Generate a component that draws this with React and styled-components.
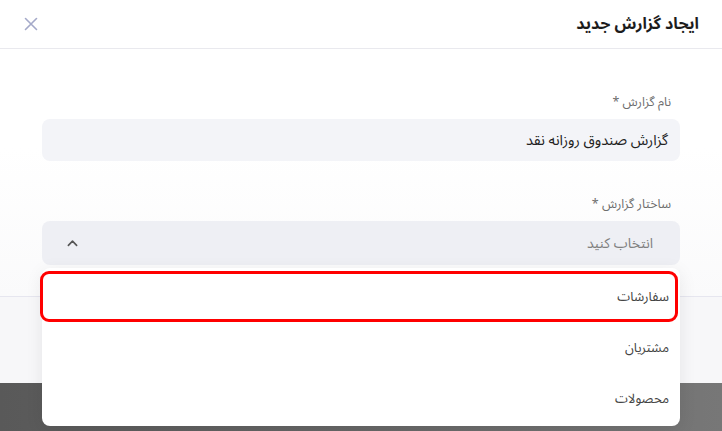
import styled, { createGlobalStyle } from 'styled-components';

const GlobalStyle = createGlobalStyle`
    html, body {
        margin: 0;
        padding: 0;
    }
    body {
        font-family: "Noto Sans Arabic", "DejaVu Sans", sans-serif;
        background: linear-gradient(90deg, #595959 0%, #6a6a6a 60%, #777 100%);
        height: 431px;
        overflow: hidden;
    }
`;

const options = ['سفارشات', 'مشتریان', 'محصولات'];

export default function App() {
    return (
        <>
            <GlobalStyle />
            <Modal dir="rtl">
                <Header>
                    <Title>ایجاد گزارش جدید</Title>
                    <CloseIcon viewBox="0 0 14 14">
                        <path d="M1.5 1.5 L12.5 12.5 M12.5 1.5 L1.5 12.5" />
                    </CloseIcon>
                </Header>
                <Body>
                    <Field>
                        <Label>نام گزارش *</Label>
                        <Input>گزارش صندوق روزانه نقد</Input>
                    </Field>
                    <Field>
                        <Label>ساختار گزارش *</Label>
                        <SelectWrap>
                            <Select>
                                <Placeholder>انتخاب کنید</Placeholder>
                                <Chevron viewBox="0 0 12 8">
                                    <path d="M1.5 6.5 L6 2 L10.5 6.5" />
                                </Chevron>
                            </Select>
                            <Menu>
                                {options.map((o, i) => (
                                    <Option key={o} $active={i === 0}>{o}</Option>
                                ))}
                            </Menu>
                        </SelectWrap>
                    </Field>
                </Body>
                <Footer />
            </Modal>
        </>
    );
}

const Modal = styled.div`
    width: 100%;
    height: 383px;
    background: #fff;
    display: flex;
    flex-direction: column;
`;

const Header = styled.div`
    height: 48px;
    padding: 0 23px 0 24px;
    border-bottom: 1px solid #e9e9ee;
    display: flex;
    align-items: center;
    justify-content: space-between;
`;

const Title = styled.h1`
    margin: 0;
    font-size: 16px;
    font-weight: 700;
    color: #1c1c1c;
`;

const CloseIcon = styled.svg`
    width: 14px;
    height: 14px;
    fill: none;
    stroke: #a4a9c9;
    stroke-width: 1.6;
    stroke-linecap: round;
`;

const Body = styled.div`
    padding: 44px 42px 0 42px;
    height: 247px;
    box-sizing: border-box;
    display: flex;
    flex-direction: column;
    gap: 34px;
    background: linear-gradient(180deg, #fff 40%, #fafafb 100%);
`;

const Field = styled.div`
    display: flex;
    flex-direction: column;
    gap: 8px;
`;

const Label = styled.label`
    font-size: 12.5px;
    color: #6d6d6d;
    padding-right: 9px;
    line-height: 18px;
`;

const Input = styled.div`
    height: 42px;
    background: #f3f4f8;
    border-radius: 8px;
    display: flex;
    align-items: center;
    padding: 0 12px;
    font-size: 14.5px;
    color: #222;
`;

const SelectWrap = styled.div`
    position: relative;
`;

const Select = styled.div`
    height: 44px;
    background: #eeeff4;
    border-radius: 8px;
    display: flex;
    align-items: center;
    justify-content: space-between;
    padding: 0 27px 0 25px;
    font-size: 14px;
`;

const Placeholder = styled.span`
    color: #808080;
`;

const Chevron = styled.svg`
    width: 11px;
    height: 8px;
    fill: none;
    stroke: #555;
    stroke-width: 1.8;
    stroke-linecap: round;
    stroke-linejoin: round;
`;

const Menu = styled.div`
    position: absolute;
    top: 47px;
    left: 0;
    right: 0;
    z-index: 2;
    background: #fff;
    border-radius: 8px;
    box-shadow: 0 4px 18px rgba(0, 0, 0, 0.08);
    display: flex;
    flex-direction: column;
    padding: 3px 0 2px;
`;

const Option = styled.div`
    height: 51px;
    margin: 0 2px 0 ${p => (p.$active ? '-2px' : '2px')};
    border: 3px solid ${p => (p.$active ? '#ff0000' : 'transparent')};
    border-radius: 9px;
    box-sizing: border-box;
    display: flex;
    align-items: center;
    padding-right: 6px;
    font-size: 13px;
    color: #444;
`;

const Footer = styled.div`
    flex: 1;
    border-top: 1px solid #e6e6ef;
    background: #f7f7f9;
`;
